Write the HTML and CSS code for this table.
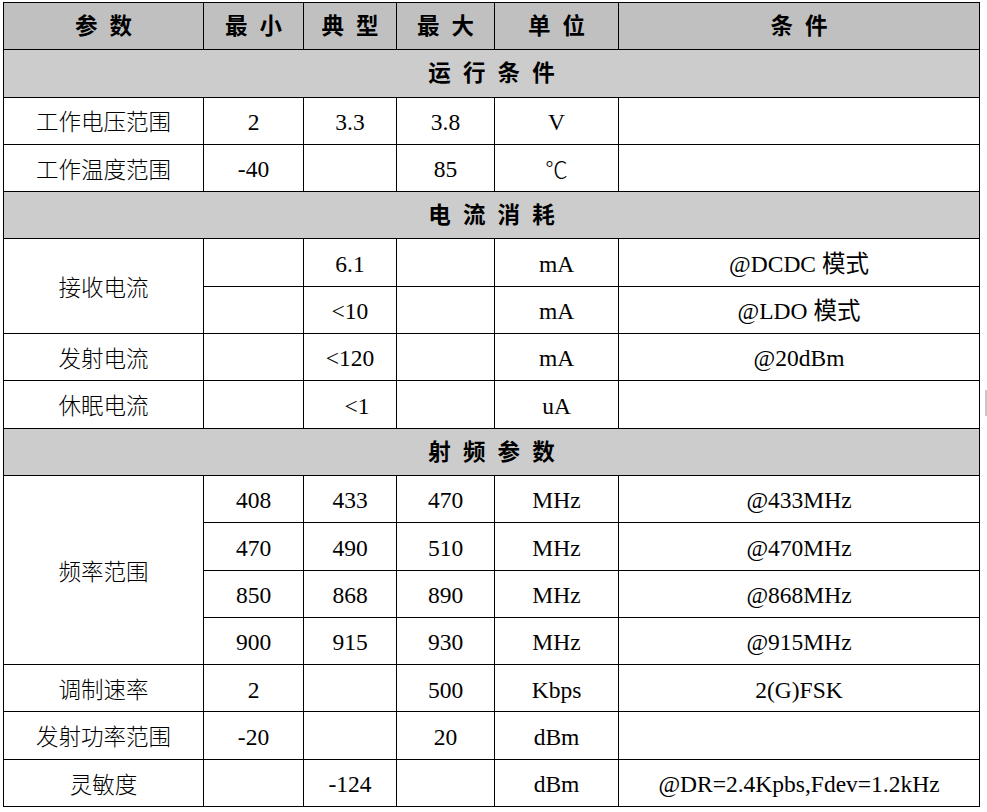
FILE: index.html
```html
<!DOCTYPE html>
<html lang="zh-CN">
<head>
<meta charset="utf-8">
<title>参数表</title>
<link rel="stylesheet" href="styles.css">
</head>
<body>
<div class="page">
<table class="spec">
  <colgroup>
    <col class="c-param"><col class="c-min"><col class="c-typ"><col class="c-max"><col class="c-unit"><col class="c-cond">
  </colgroup>
  <thead>
    <tr class="head">
      <th class="cjk">参 数</th><th class="cjk">最 小</th><th class="cjk">典 型</th><th class="cjk">最 大</th><th class="cjk">单 位</th><th class="cjk">条 件</th>
    </tr>
  </thead>
  <tbody>
    <tr class="section"><td colspan="6" class="cjk">运 行 条 件</td></tr>
    <tr><td class="cjk">工作电压范围</td><td>2</td><td>3.3</td><td>3.8</td><td>V</td><td></td></tr>
    <tr><td class="cjk">工作温度范围</td><td>-40</td><td></td><td>85</td><td class="cjk">℃</td><td></td></tr>
    <tr class="section"><td colspan="6" class="cjk">电 流 消 耗</td></tr>
    <tr><td rowspan="2" class="cjk">接收电流</td><td></td><td>6.1</td><td></td><td>mA</td><td>@DCDC 模式</td></tr>
    <tr><td></td><td>&lt;10</td><td></td><td>mA</td><td>@LDO 模式</td></tr>
    <tr><td class="cjk">发射电流</td><td></td><td>&lt;120</td><td></td><td>mA</td><td>@20dBm</td></tr>
    <tr><td class="cjk">休眠电流</td><td></td><td class="shift">&lt;1</td><td></td><td>uA</td><td></td></tr>
    <tr class="section"><td colspan="6" class="cjk">射 频 参 数</td></tr>
    <tr><td rowspan="4" class="cjk">频率范围</td><td>408</td><td>433</td><td>470</td><td>MHz</td><td>@433MHz</td></tr>
    <tr><td>470</td><td>490</td><td>510</td><td>MHz</td><td>@470MHz</td></tr>
    <tr><td>850</td><td>868</td><td>890</td><td>MHz</td><td>@868MHz</td></tr>
    <tr><td>900</td><td>915</td><td>930</td><td>MHz</td><td>@915MHz</td></tr>
    <tr><td class="cjk">调制速率</td><td>2</td><td></td><td>500</td><td>Kbps</td><td>2(G)FSK</td></tr>
    <tr><td class="cjk">发射功率范围</td><td>-20</td><td></td><td>20</td><td>dBm</td><td></td></tr>
    <tr><td class="cjk">灵敏度</td><td></td><td>-124</td><td></td><td>dBm</td><td>@DR=2.4Kpbs,Fdev=1.2kHz</td></tr>
  </tbody>
</table>
<div class="edge-mark"></div>
</div>
</body>
</html>
```

FILE: styles.css
```css
html, body {
  margin: 0;
  padding: 0;
  background: #ffffff;
}

.page {
  position: relative;
  padding: 2px 0 0 3px;
  width: 984px;
}

.spec {
  border-collapse: collapse;
  table-layout: fixed;
  width: 976px;
  font-family: "Liberation Serif", "Noto Sans CJK SC", serif;
  font-size: 23.5px;
  color: #000;
}

.c-param { width: 200px; }
.c-min { width: 100px; }
.c-typ { width: 93px; }
.c-max { width: 98px; }
.c-unit { width: 124px; }
.c-cond { width: 361px; }

.spec tr {
  height: 47.3px;
}

.spec th,
.spec td {
  border: 1px solid #000;
  padding: 4px 0 0 0;
  text-align: center;
  vertical-align: middle;
  line-height: 1;
  white-space: nowrap;
}

.spec .cjk {
  font-family: "Noto Sans CJK SC", "Liberation Serif", sans-serif;
  font-size: 22.5px;
  font-weight: 300;
  padding-top: 0;
}

.spec .head th {
  background: #c0c0c0;
  font-weight: 700;
  word-spacing: 7px;
  padding-bottom: 4px;
}

.spec .section td {
  background: #cccccc;
  font-weight: 700;
  word-spacing: 7px;
  padding-bottom: 4px;
}

.spec td.shift {
  padding-left: 14px;
}

.edge-mark {
  position: absolute;
  left: 985px;
  top: 390px;
  width: 2px;
  height: 26px;
  background: #c8c8c8;
}
```
